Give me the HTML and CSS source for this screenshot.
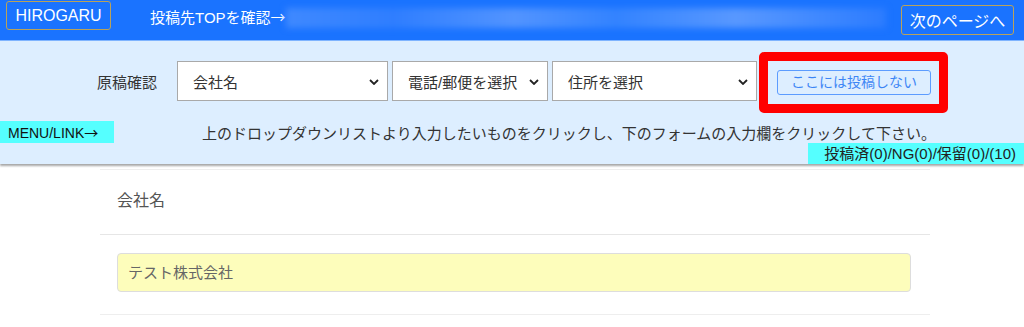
FILE: index.html
```
<html>
  <head>
    <meta charset="utf-8">
    <link rel="stylesheet" href="styles.css">
    <title>HIROGARU</title>
  </head>
  <body>
    <div id="topbar">
      <span class="top-btn logo">HIROGARU</span>
      <span class="top-link">投稿先TOPを確認<span class="arrow">→</span></span>
      <span class="blurred-url"></span>
      <span class="top-btn next">次のページへ</span>
    </div>
    <div id="panel">
      <div class="pick-row">
        <span class="pick-label">原稿確認</span>
        <div class="pick sel-company">会社名<svg class="chev" viewBox="0 0 10 6"><path d="M1 1 L5 5 L9 1" /></svg></div>
        <div class="pick sel-phone">電話/郵便を選択<svg class="chev" viewBox="0 0 10 6"><path d="M1 1 L5 5 L9 1" /></svg></div>
        <div class="pick sel-address">住所を選択<svg class="chev" viewBox="0 0 10 6"><path d="M1 1 L5 5 L9 1" /></svg></div>
        <div class="highlight">
          <span class="skip-btn">ここには投稿しない</span>
        </div>
      </div>
      <div class="hint-row">
        <span class="menu-tag">MENU/LINK<span class="arrow">→</span></span>
        <span class="hint">上のドロップダウンリストより入力したいものをクリックし、下のフォームの入力欄をクリックして下さい。</span>
      </div>
      <div class="status-row">
        <span class="status">投稿済(0)/NG(0)/保留(0)/(10)</span>
      </div>
    </div>
    <div id="form">
      <div class="form-label">会社名</div>
      <div class="form-field">
        <div class="field-input">テスト株式会社</div>
      </div>
    </div>
  </body>
</html>
```
FILE: styles.css
```
html, body {
  margin:      0;
  font-family: "Liberation Sans", "Noto Sans CJK JP", sans-serif;
  color:       #333;
  background:  #fff;
}
.arrow {
  font-family: "Noto Sans CJK JP", sans-serif;
}
#topbar {
  height:      40px;
  background:  #1a73ff;
  display:     flex;
  align-items: flex-start;
  color:       #fff;
}
.top-btn {
  border:        1px solid #b9a25a;
  border-radius: 3px;
  font-size:     16px;
  box-sizing:    border-box;
  display:       flex;
  align-items:   center;
  justify-content: center;
}
.logo {
  margin:  1px 0 0 6px;
  width:   105px;
  height:  29px;
}
.top-link {
  font-size:   15px;
  margin:      7px 0 0 39px;
  line-height: 20px;
}
.blurred-url {
  width:      600px;
  height:     20px;
  margin-top: 8px;
  background: linear-gradient(90deg, #3f89ff 0%, #2f7eff 18%, #5294ff 38%, #3383ff 55%, #5898ff 75%, #2c7cff 100%);
  filter:     blur(3px);
}
.next {
  margin:  5px 10px 0 auto;
  width:   113px;
  height:  30px;
}
#panel {
  background: #ddeeff;
  border-top: 1px solid #7fb4ff;
  box-shadow: 0 2px 2px rgba(0, 0, 0, 0.35);
  padding-top: 11px;
}
.pick-row {
  display:      flex;
  align-items:  center;
  padding-left: 97px;
  height:       61px;
}
.pick-label {
  font-size:    15px;
  width:        80px;
  margin-top:   -3px;
}
.pick {
  height:       40px;
  box-sizing:   border-box;
  background:   #fff;
  border:       1px solid #a9a9a9;
  font-size:    15px;
  display:      flex;
  align-items:  center;
  padding-left: 15px;
  margin-right: 4px;
  margin-top:   -3px;
  position:     relative;
}
.sel-company { width: 211px; }
.sel-phone   { width: 156px; }
.sel-address { width: 205px; margin-right: 2px; }
.chev {
  width:    10px;
  height:   6px;
  position: absolute;
  right:    8px;
  top:      17px;
}
.chev path {
  fill:         none;
  stroke:       #222;
  stroke-width: 1.8;
}
.highlight {
  border:        9px solid #ff0000;
  border-radius: 5px;
  padding:       9px 8px 10px 9px;
  height:        61px;
  box-sizing:    border-box;
}
.skip-btn {
  display:       block;
  width:         154px;
  height:        25px;
  box-sizing:    border-box;
  border:        1px solid #5c9cff;
  border-radius: 3px;
  color:         #3d86f5;
  font-size:     14px;
  text-align:    center;
  line-height:   23px;
}
.hint-row {
  display:     flex;
  align-items: center;
  margin-top:  8px;
  height:      22px;
}
.menu-tag {
  background:  #55ffff;
  width:       114px;
  height:      22px;
  box-sizing:  border-box;
  padding-left: 8px;
  font-size:   14px;
  line-height: 22px;
  color:       #111;
}
.hint {
  flex:       1;
  text-align: center;
  font-size:  15px;
  color:      #333;
}
.status-row {
  display:         flex;
  justify-content: flex-end;
}
.status {
  background:    #55ffff;
  width:         216px;
  height:        21px;
  box-sizing:    border-box;
  text-align:    right;
  padding-right: 8px;
  font-size:     15px;
  line-height:   21px;
  color:         #222;
}
#form {
  width:      830px;
  margin:     5px 0 0 100px;
  border-top: 1px solid #eee;
}
.form-label {
  height:        64px;
  border-bottom: 1px solid #e6e6e6;
  padding-left:  17px;
  font-size:     16px;
  line-height:   62px;
  color:         #555;
}
.form-field {
  padding:       18px 19px 22px 17px;
  border-bottom: 1px solid #eee;
}
.field-input {
  height:        39px;
  box-sizing:    border-box;
  background:    #fdfdbb;
  border:        1px solid #ddd;
  border-radius: 4px;
  padding-left:  10px;
  font-size:     15px;
  line-height:   37px;
  color:         #666;
}
```
